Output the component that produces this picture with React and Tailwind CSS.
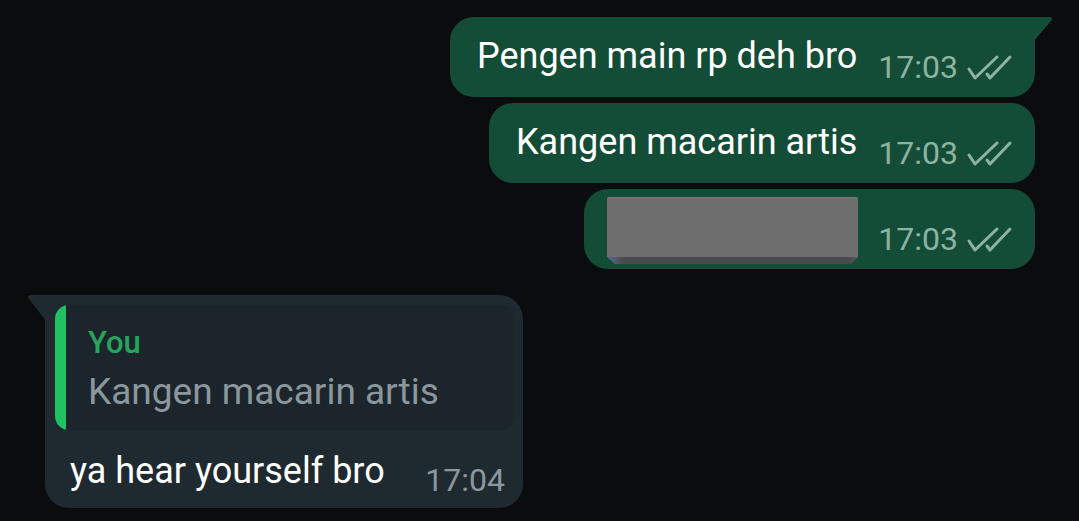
import React from "react";

const font = { fontFamily: "Roboto, 'Noto Sans', sans-serif" };

const Ticks = () => (
  <svg width="47" height="27" viewBox="0 0 47 27" fill="none" className="ml-[8px] shrink-0">
    <path d="M3 15 L9 24 L31 3" stroke="#8db3a2" strokeWidth="3" strokeLinecap="round" strokeLinejoin="round" />
    <path d="M21 20 L24 24 L44 3" stroke="#8db3a2" strokeWidth="3" strokeLinecap="round" strokeLinejoin="round" />
  </svg>
);

const Meta = ({ time }) => (
  <div className="flex items-center mt-[34px]">
    <span className="text-[32px] leading-none text-[#8db3a2]">{time}</span>
    <Ticks />
  </div>
);

const OutBubble = ({ children, tail = false, time }) => (
  <div
    className={
      tail
        ? "relative h-[80px] flex items-start bg-[#144d37] rounded-[24px] rounded-tr-none pr-[22px]"
        : "relative h-[80px] flex items-start bg-[#144d37] rounded-[24px] pr-[22px]"
    }
  >
    {tail && (
      <svg width="20" height="24" viewBox="0 0 20 24" className="absolute -right-[19px] top-0">
        <path d="M0 0 H15 Q20 0 17 4 L0 24 Z" fill="#144d37" />
      </svg>
    )}
    {children}
    <Meta time={time} />
  </div>
);

export default function App() {
  return (
    <div className="w-full h-[521px] overflow-hidden bg-[#0b0c0d] pt-[17px]" style={font}>
      <div className="flex flex-col items-end gap-[6px] pr-[44px]">
        <OutBubble tail time="17:03">
          <span className="pl-[27px] pt-[19px] pr-[21px] text-[36px] leading-[40px] text-white">Pengen main rp deh bro</span>
        </OutBubble>
        <OutBubble time="17:03">
          <span className="pl-[27px] pt-[19px] pr-[21px] text-[36px] leading-[40px] text-white">Kangen macarin artis</span>
        </OutBubble>
        <OutBubble time="17:03">
          <div className="ml-[23px] mt-[8px] mr-[20px] w-[251px] h-[67px] flex flex-col">
            <div className="flex-1 bg-[#6e6e6f] rounded-t-[2px] border-t border-[#7a7a7c]"></div>
            <div className="h-[7px] bg-[linear-gradient(90deg,#5a6a9a_0%,#4b4b4e_6%,#4b4b4e_96%,#585862_100%)] [clip-path:polygon(0_0,100%_0,97%_100%,3%_100%)]"></div>
          </div>
        </OutBubble>
      </div>

      <div className="pl-[45px] mt-[26px]">
        <div className="relative w-[478px] h-[213px] bg-[#1f2a30] rounded-[24px] rounded-tl-none pt-[10px] pl-[10px] pr-[8px]">
          <svg width="20" height="26" viewBox="0 0 20 26" className="absolute -left-[19px] top-0">
            <path d="M20 0 H5 Q0 0 3 4 L20 26 Z" fill="#1f2a30" />
          </svg>
          <div className="flex h-[125px] rounded-[14px] overflow-hidden bg-[#1b252b]">
            <div className="w-[11px] bg-[#21c063]"></div>
            <div className="pl-[22px] pt-[21px]">
              <div className="text-[31px] leading-[34px] font-medium text-[#25a55c]">You</div>
              <div className="mt-[12px] text-[37px] leading-[40px] text-[#8b979d]">Kangen macarin artis</div>
            </div>
          </div>
          <div className="flex items-start pl-[15px] pr-[10px]">
            <span className="mt-[21px] text-[36px] leading-[40px] text-white">ya hear yourself bro</span>
            <span className="ml-auto mt-[34px] text-[32px] leading-none text-[#8b979d]">17:04</span>
          </div>
        </div>
      </div>
    </div>
  );
}
